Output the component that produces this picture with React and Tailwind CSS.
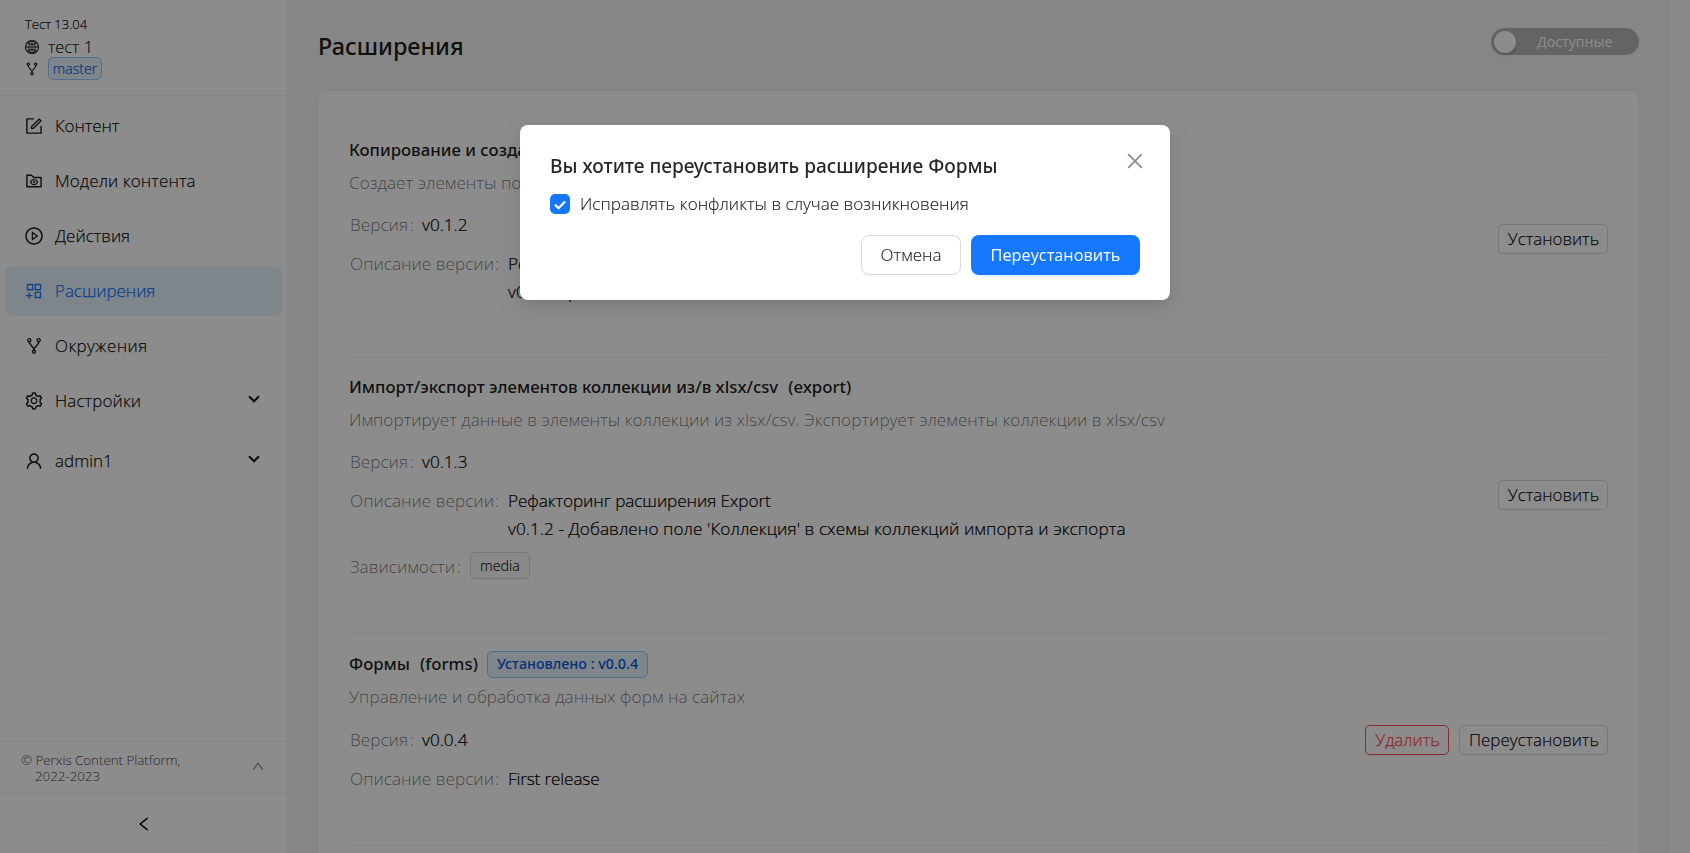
import {
  AiOutlineForm,
  AiOutlineFolderView,
  AiOutlinePlayCircle,
  AiOutlineAppstoreAdd,
  AiOutlineFork,
  AiOutlineSetting,
  AiOutlineUser,
  AiOutlineGlobal,
  AiOutlineUp,
  AiOutlineLeft,
  AiOutlineClose,
} from "react-icons/ai";

const NAV = [
  { icon: AiOutlineForm, label: "Контент", tracking: "tracking-[-0.1px]" },
  { icon: AiOutlineFolderView, label: "Модели контента", tracking: "tracking-[0.1px]" },
  { icon: AiOutlinePlayCircle, label: "Действия", tracking: "tracking-normal" },
  { icon: AiOutlineAppstoreAdd, label: "Расширения", tracking: "tracking-[-0.05px]", active: true },
  { icon: AiOutlineFork, label: "Окружения", tracking: "tracking-[0.4px]" },
  { icon: AiOutlineSetting, label: "Настройки", tracking: "tracking-[0.1px]", expandable: true },
  { icon: AiOutlineUser, label: "admin1", tracking: "tracking-normal", expandable: true, gap: true },
];

const EXTENSIONS = [
  {
    title: "Копирование и создание",
    id: "(copy)",
    about: "Создает элементы по образцу",
    version: "v0.1.2",
    notes: [{ text: "Рефакторинг" }, { text: "v0.1.1 - релиз" }],
    height: "h-[238px] pt-4",
  },
  {
    title: "Импорт/экспорт элементов коллекции из/в xlsx/csv",
    id: "(export)",
    about:
      "Импортирует данные в элементы коллекции из xlsx/csv. Экспортирует элементы коллекции в xlsx/csv",
    version: "v0.1.3",
    notes: [
      { text: "Рефакторинг расширения Export", tracking: "tracking-[-0.11px]" },
      {
        text: "v0.1.2 - Добавлено поле 'Коллекция' в схемы коллекций импорта и экспорта",
        tracking: "tracking-[0.065px]",
      },
    ],
    deps: "media",
    height: "h-[276px] pt-[15px]",
  },
  {
    title: "Формы",
    id: "(forms)",
    installed: "Установлено : v0.0.4",
    about: "Управление и обработка данных форм на сайтах",
    version: "v0.0.4",
    notes: [{ text: "First release", tracking: "tracking-[-0.15px]" }],
    height: "h-[212px] pt-4",
  },
];

function Chevron() {
  return (
    <svg
      viewBox="0 0 12 8"
      className="mb-1 h-2 w-3"
      fill="none"
      stroke="currentColor"
      strokeWidth="2.2"
    >
      <path d="M1 1.2 6 6.2l5-5" />
    </svg>
  );
}

function NavItem({ icon: Icon, label, tracking, active, expandable, gap }) {
  return (
    <li
      className={`mx-[5px] flex h-[50px] items-center rounded-lg pr-[22px] pl-[19px] text-[17px] ${
        active ? "bg-[#e6f4ff] text-[#1677ff]" : "text-black/90"
      } ${gap ? "mt-[5px]" : ""}`}
    >
      <Icon className="size-5 shrink-0" />
      <span className={`ml-[11px] flex-1 [-webkit-text-stroke:0.25px] ${tracking}`}>{label}</span>
      {expandable && <Chevron />}
    </li>
  );
}

function Sidebar() {
  return (
    <aside className="flex h-full w-[287px] shrink-0 flex-col bg-white">
      <div className="flex h-24 flex-col border-b border-[#f0f0f0] pt-[15px] pl-6 text-black/90">
        <div className="h-[18px] pl-px text-[13px] leading-[18px] [-webkit-text-stroke:0.25px]">
          Тест 13.04
        </div>
        <div className="mt-[2px] flex h-6 items-center">
          <AiOutlineGlobal className="size-4" />
          <span className="ml-2 text-[16.4px] leading-6 [-webkit-text-stroke:0.2px]">тест 1</span>
        </div>
        <div className="-mt-[2px] flex h-[23px] items-center">
          <AiOutlineFork className="size-4" />
          <span className="ml-2 flex h-[23px] w-[54px] items-center justify-center rounded-[5px] border border-[#91caff] bg-[#e6f4ff] text-[14.1px] text-[#0958d9] [-webkit-text-stroke:0.2px]">
            master
          </span>
        </div>
      </div>
      <ul className="mt-[5px] flex flex-1 flex-col gap-[5px]">
        {NAV.map((item) => (
          <NavItem key={item.label} {...item} />
        ))}
      </ul>
      <div className="flex h-[53px] items-center justify-between border-y border-[#f0f0f0] pr-[22px] pl-[21px]">
        <div className="text-[13.3px] leading-4 text-black/65 [-webkit-text-stroke:0.15px]">
          <div>© Perxis Content Platform,</div>
          <div className="pl-3.5">2022-2023</div>
        </div>
        <AiOutlineUp className="mb-1 size-3.5 text-black/50" />
      </div>
      <div className="flex h-[59px] items-center justify-center">
        <AiOutlineLeft className="size-[18px] text-black" />
      </div>
    </aside>
  );
}

function SmallButton({ danger, width, children }) {
  return (
    <button
      className={`flex h-[30px] items-center justify-center rounded-[5px] border bg-white pl-px text-[16.9px] shadow-[0_2px_0_rgba(0,0,0,0.02)] [-webkit-text-stroke:0.25px] ${width} ${
        danger ? "border-[#ff4d4f] text-[#ff4d4f]" : "border-[#d9d9d9] text-black/90"
      }`}
    >
      {children}
    </button>
  );
}

function Extension({ title, id, installed, about, version, notes, deps, height }) {
  return (
    <article className={`flex justify-between border-b border-[#f0f0f0] ${height}`}>
      <div className="text-[17.2px] leading-7 whitespace-nowrap">
        <h2 className="flex h-7 items-center font-['Noto_Sans','Open_Sans',sans-serif] text-[16.8px] font-medium text-black/90">
          <span>{title}</span>
          <span className="ml-[10px]">{id}</span>
          {installed && (
            <span className="ml-[9px] flex h-[27px] items-center rounded-[5px] border border-[#91caff] bg-[#e6f4ff] px-[9px] text-[14.3px] text-[#0958d9]">
              {installed}
            </span>
          )}
        </h2>
        <p className="mt-[5px] text-black/55">{about}</p>
        <dl>
          <div className={`flex ${installed ? "mt-[15px]" : "mt-[14px]"}`}>
            <dt className="w-[73px] pl-px text-black/55">
              Версия<span className="ml-[2px]">:</span>
            </dt>
            <dd className="text-black [-webkit-text-stroke:0.2px]">{version}</dd>
          </div>
          <div className="mt-[11px] flex">
            <dt className="w-[159px] pl-px text-black/55">
              Описание версии<span className="ml-px">:</span>
            </dt>
            <dd className="text-black [-webkit-text-stroke:0.2px]">
              {notes.map(({ text, tracking }) => (
                <div key={text} className={tracking}>
                  {text}
                </div>
              ))}
            </dd>
          </div>
          {deps && (
            <div className="mt-[9px] flex">
              <dt className="w-[121px] pt-px pl-px text-black/55">
                Зависимости<span className="ml-[2px]">:</span>
              </dt>
              <dd className="flex h-[27px] w-[60px] items-center justify-center rounded-[5px] border border-[#d9d9d9] bg-[#fafafa] text-[14.3px] text-black/90 [-webkit-text-stroke:0.2px]">
                {deps}
              </dd>
            </div>
          )}
        </dl>
      </div>
      <div className="flex items-center gap-[10px] pb-4">
        {installed ? (
          <>
            <SmallButton danger width="w-[84px]">
              Удалить
            </SmallButton>
            <SmallButton width="w-[149px]">Переустановить</SmallButton>
          </>
        ) : (
          <SmallButton width="w-[110px]">Установить</SmallButton>
        )}
      </div>
    </article>
  );
}

function Dialog() {
  return (
    <div className="fixed inset-0 flex items-start justify-center bg-black/45 pt-[125px]">
      <div
        role="dialog"
        className="h-[175px] w-[650px] rounded-lg bg-white px-[30px] pt-[26px] shadow-[0_6px_16px_rgba(0,0,0,0.08),0_3px_6px_-4px_rgba(0,0,0,0.12),0_9px_28px_8px_rgba(0,0,0,0.05)]"
      >
        <div className="flex h-[30px] items-start justify-between">
          <h3 className="font-['Noto_Sans','Open_Sans',sans-serif] text-[19.1px] leading-[30px] font-medium text-black/85">
            Вы хотите переустановить расширение Формы
          </h3>
          <AiOutlineClose className="-mt-px -mr-[6px] size-[22px] text-black/45" />
        </div>
        <label className="mt-[9px] flex h-7 items-center text-[17.1px] text-black/90">
          <span className="flex size-5 items-center justify-center rounded-[5px] bg-[#1677ff]">
            <svg
              viewBox="0 0 12 10"
              className="mt-px h-2.5 w-3"
              fill="none"
              stroke="#fff"
              strokeWidth="2.2"
            >
              <path d="M1 4.6 4.6 8.2 11 1.4" />
            </svg>
          </span>
          <span className="ml-[10px] [-webkit-text-stroke:0.1px]">
            Исправлять конфликты в случае возникновения
          </span>
        </label>
        <div className="mt-[17px] flex justify-end gap-[10px]">
          <button className="flex h-10 w-[100px] items-center justify-center rounded-lg border border-[#d9d9d9] bg-white text-[17px] text-black/90 shadow-[0_2px_0_rgba(0,0,0,0.02)] [-webkit-text-stroke:0.1px]">
            Отмена
          </button>
          <button className="flex h-10 w-[169px] items-center justify-center rounded-lg bg-[#1677ff] text-[16.3px] font-normal text-white shadow-[0_2px_0_rgba(5,145,255,0.1)]">
            Переустановить
          </button>
        </div>
      </div>
    </div>
  );
}

export default function App() {
  return (
    <div className="flex h-[853px] w-[1690px] overflow-hidden bg-[#f5f5f5] font-['Open_Sans','Noto_Sans',sans-serif] font-light">
      <Sidebar />
      <main className="flex flex-1 flex-col pt-7 pr-[30px] pl-[31px]">
        <header className="flex h-[62px] shrink-0 items-start justify-between">
          <h1 className="font-['Noto_Sans','Open_Sans',sans-serif] text-[23.4px] leading-9 font-medium text-black/90">
            Расширения
          </h1>
          <div className="flex h-[27px] w-[148px] items-center rounded-full bg-black/25 pl-[3px]">
            <span className="size-[22px] rounded-full bg-white shadow-[0_2px_4px_rgba(0,35,11,0.2)]" />
            <span className="ml-[21px] text-[14.2px] font-normal text-white">Доступные</span>
          </div>
        </header>
        <section className="h-[800px] shrink-0 rounded-t-lg border border-[#f0f0f0] bg-white px-[30px] pt-[29px]">
          {EXTENSIONS.map((ext) => (
            <Extension key={ext.id} {...ext} />
          ))}
        </section>
      </main>
      <div className="w-[21px] shrink-0 bg-[#fcfcfc]" />
      <Dialog />
    </div>
  );
}
